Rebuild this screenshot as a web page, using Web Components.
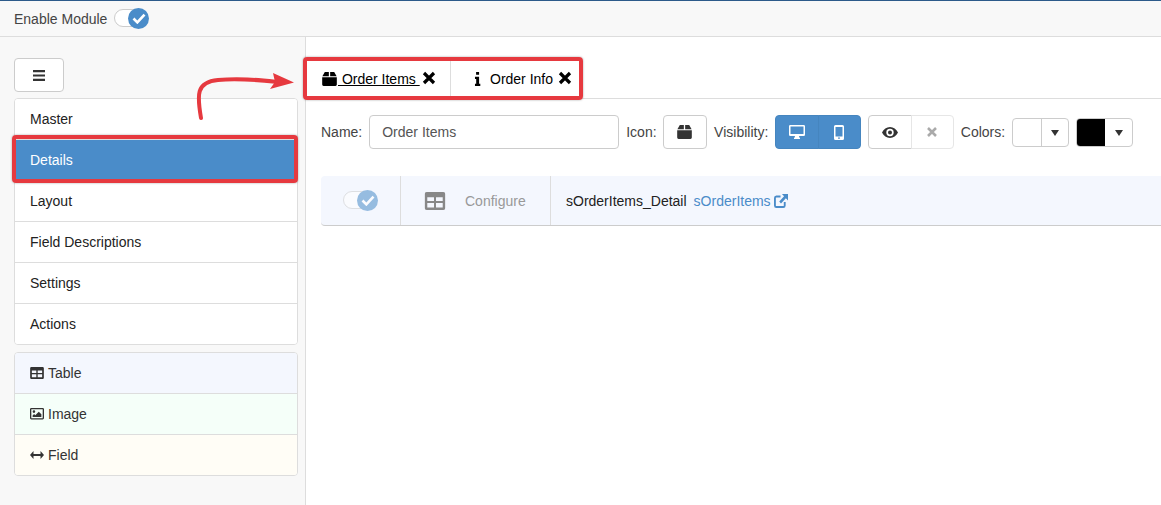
<!DOCTYPE html>
<html>
<head>
<meta charset="utf-8">
<style>
  html, body { margin: 0; height: 100%; }
  body { font: 14px/20px "Liberation Sans", Arial, sans-serif; color: #333; background: #fff; overflow: hidden; }
</style>
</head>
<body>
<admin-page></admin-page>

<script>
const ICONS = {
  box: '<svg viewBox="0 0 16 14" width="15" height="14" preserveAspectRatio="none"><path fill="currentColor" d="M3 0h4.300v4.300H.4zM8.700 0H13l2.600 4.300H8.700zM.2 5.300h15.600v7.300q0 1.400-1.400 1.400H1.600q-1.400 0-1.400-1.400z"/></svg>',
  times: '<svg viewBox="0 0 14 14" width="14" height="14"><path fill="none" stroke="currentColor" stroke-width="3.200" d="M2 2l10 10M12 2L2 12"/></svg>',
  info: '<svg viewBox="0 0 7 15" width="7" height="14"><path fill="currentColor" d="M2 0h3.200v3H2zM.8 5h4.400v7.500H6.500V15H.8v-2.500h1.300V7.500H.8z"/></svg>',
  table: '<svg viewBox="0 0 16 14" width="14" height="12"><path fill="currentColor" fill-rule="evenodd" d="M1.500 0h13Q16 0 16 1.500v11q0 1.500-1.500 1.500h-13Q0 14 0 12.500v-11Q0 0 1.500 0zM2 4v3h5.200V4zm6.800 0v3H14V4zM2 8.500V12h5.200V8.500zm6.800 0V12H14V8.500z"/></svg>',
  image: '<svg viewBox="0 0 16 13" width="14" height="11.400"><path fill="currentColor" fill-rule="evenodd" d="M1.500 0h13Q16 0 16 1.500v10q0 1.500-1.500 1.500h-13Q0 13 0 11.500v-10Q0 0 1.500 0zm0 1.300v10.400h13V1.300zM4.500 2.600a1.500 1.500 0 1 1 0 3 1.500 1.500 0 0 1 0-3zM3 10.400V8.600l1.700-1.700 1.300 1.300 4-4 3 3v3.200z"/></svg>',
  arrows: '<svg viewBox="0 0 14 8" width="14" height="8"><path fill="currentColor" d="M3.500 0v3h7V0L14 4l-3.500 4V5h-7v3L0 4z"/></svg>',
  desktop: '<svg viewBox="0 0 16 14" width="16" height="14"><path fill="currentColor" fill-rule="evenodd" d="M1.300 0h13.400Q16 0 16 1.300v8.400q0 1.300-1.300 1.300H10q0 1.300 1 2v1H5v-1q1-.7 1-2H1.300Q0 11 0 9.700V1.300Q0 0 1.300 0zm.2 1.500v7.500h13V1.500z"/></svg>',
  mobile: '<svg viewBox="0 0 10 15" width="10" height="15"><path fill="currentColor" fill-rule="evenodd" d="M1.500 0h7Q10 0 10 1.500v12Q10 15 8.500 15h-7Q0 15 0 13.500v-12Q0 0 1.500 0zm0 2v9.500h7V2zM5 12.200a.9.9 0 1 0 0 1.800.9.9 0 0 0 0-1.800z"/></svg>',
  eye: '<svg viewBox="0 0 16 11" width="16" height="11"><path fill="currentColor" fill-rule="evenodd" d="M8 0c3.500 0 6.300 2.200 8 5.500C14.300 8.800 11.500 11 8 11S1.700 8.800 0 5.500C1.700 2.200 4.500 0 8 0zM8 1.800a3.700 3.700 0 1 0 0 7.400 3.700 3.700 0 0 0 0-7.400zM8 3.500a2 2 0 1 1 0 4 2 2 0 0 1 0-4z"/></svg>',
  link: '<svg viewBox="0 0 15 14" width="14" height="14" preserveAspectRatio="none"><path fill="none" stroke="currentColor" stroke-width="2" d="M11.500 8v3.500q0 1.500-1.500 1.500H2.500Q1 13 1 11.500V4q0-1.500 1.500-1.500H7"/><path fill="currentColor" d="M8.500 0H15v6.500L12.700 4.200 7.500 9.400 5.600 7.500l5.200-5.200z"/></svg>',
  bars: '<svg viewBox="0 0 12 11" width="12" height="11"><path fill="currentColor" d="M0 0h12v2.200H0zM0 4.400h12v2.200H0zM0 8.800h12V11H0z"/></svg>'
};

class AppIcon extends HTMLElement {
  connectedCallback() {
    if (this.shadowRoot) return;
    const shadow = this.attachShadow({ mode: 'open' });
    shadow.innerHTML = `<style>:host { display: inline-flex; align-items: center; justify-content: center; } svg { display: block; }</style>${ICONS[this.getAttribute('name')]}`;
  }
}
customElements.define('app-icon', AppIcon);

class CheckToggle extends HTMLElement {
  constructor() {
    super();
    const shadow = this.attachShadow({ mode: 'open' });
    shadow.innerHTML = `
      <style>
        :host { display: inline-block; position: relative; width: 35px; height: 21px; }
        .track { position: absolute; left: 0; top: 1px; width: 34px; height: 18px; box-sizing: border-box; background: #fff; border: 1px solid #ccc; border-radius: 10px; }
        .knob { position: absolute; right: 0; top: 0; width: 21px; height: 21px; border-radius: 50%; background: #4a8cc9; }
        svg { display: block; position: absolute; left: 4px; top: 5px; }
        :host([dim]) { opacity: .55; }
      </style>
      <div class="track"></div>
      <div class="knob"><svg viewBox="0 0 12 10" width="14" height="11"><path fill="none" stroke="#fff" stroke-width="2.400" d="M1 5l3.500 3.500L11 1.500"/></svg></div>`;
  }
}
customElements.define('check-toggle', CheckToggle);

class TopBar extends HTMLElement {
  constructor() {
    super();
    const shadow = this.attachShadow({ mode: 'open' });
    shadow.innerHTML = `
      <style>
        :host { display: flex; align-items: center; gap: 7px; height: 37px; box-sizing: border-box; padding: 0 14px; background: #f8f8f8; border-top: 1px solid #2c5a8a; border-bottom: 1px solid #ddd; font-size: 14px; color: #444; }
      </style>
      <span>Enable Module</span><check-toggle></check-toggle>`;
  }
}
customElements.define('top-bar', TopBar);

class SideItem extends HTMLElement {
  constructor() {
    super();
    const shadow = this.attachShadow({ mode: 'open' });
    shadow.innerHTML = `
      <style>
        :host { display: flex; align-items: center; gap: 4px; height: 41px; box-sizing: border-box; padding: 0 15px; background: var(--item-bg, #fff); color: var(--item-color, #222); border-bottom: 1px solid #ddd; }
        :host(:last-child) { height: 40px; border-bottom: 0; }
        :host([active]) { background: #4a8cc9; color: #fff; }
      </style>
      <slot name="icon"></slot><slot></slot>`;
  }
}
customElements.define('side-item', SideItem);

class SideGroup extends HTMLElement {
  constructor() {
    super();
    const shadow = this.attachShadow({ mode: 'open' });
    shadow.innerHTML = `
      <style>
        :host { display: block; width: 284px; box-sizing: border-box; border: 1px solid #ddd; border-radius: 4px; overflow: hidden; background: #fff; }
      </style>
      <slot></slot>`;
  }
}
customElements.define('side-group', SideGroup);

class SideBar extends HTMLElement {
  constructor() {
    super();
    const shadow = this.attachShadow({ mode: 'open' });
    shadow.innerHTML = `
      <style>
        :host { display: flex; flex-direction: column; width: 306px; flex: none; box-sizing: border-box; padding: 21px 0 0 14px; background: #f8f8f8; border-right: 1px solid #ddd; }
        button { display: flex; align-items: center; justify-content: center; width: 50px; height: 34px; padding: 0; margin-bottom: 6px; background: #fff; border: 1px solid #ccc; border-radius: 4px; color: #333; }
        side-group + side-group { margin-top: 7px; }
        side-item[tint=blue] { --item-bg: #f4f7fe; --item-color: #333; }
        side-item[tint=green] { --item-bg: #f5fff9; --item-color: #333; }
        side-item[tint=yellow] { --item-bg: #fffdf6; --item-color: #333; }
      </style>
      <button><app-icon name="bars"></app-icon></button>
      <side-group>
        <side-item>Master</side-item>
        <side-item active>Details</side-item>
        <side-item>Layout</side-item>
        <side-item>Field Descriptions</side-item>
        <side-item>Settings</side-item>
        <side-item>Actions</side-item>
      </side-group>
      <side-group>
        <side-item tint="blue"><app-icon slot="icon" name="table"></app-icon>Table</side-item>
        <side-item tint="green"><app-icon slot="icon" name="image"></app-icon>Image</side-item>
        <side-item tint="yellow"><app-icon slot="icon" name="arrows"></app-icon>Field</side-item>
      </side-group>`;
  }
}
customElements.define('side-bar', SideBar);

class TabStrip extends HTMLElement {
  constructor() {
    super();
    const shadow = this.attachShadow({ mode: 'open' });
    shadow.innerHTML = `
      <style>
        :host { display: flex; height: 62px; box-sizing: border-box; padding-top: 22px; border-bottom: 1px solid #ddd; color: #000; }
        .tab { display: flex; align-items: center; height: 39px; box-sizing: border-box; border-right: 1px solid #ddd; }
        .one { width: 145px; padding-left: 16px; }
        .two { padding-left: 23px; border-right: 0; }
        .one .label { margin-left: 1px; text-decoration: underline; white-space: pre; }
        .two .label { margin-left: 9px; }
        .x { margin-left: 5px; margin-top: -2px; }
        .one .x { margin-left: 2px; }
      </style>
      <div class="tab one"><app-icon name="box"></app-icon><span class="label"> Order Items </span><app-icon class="x" name="times"></app-icon></div>
      <div class="tab two"><app-icon name="info"></app-icon><span class="label">Order Info</span><app-icon class="x" name="times"></app-icon></div>`;
  }
}
customElements.define('tab-strip', TabStrip);

class ToolRow extends HTMLElement {
  constructor() {
    super();
    const shadow = this.attachShadow({ mode: 'open' });
    shadow.innerHTML = `
      <style>
        :host { display: flex; align-items: center; height: 34px; margin: 16px 0 0 15px; gap: 7px; color: #444; white-space: nowrap; }
        .input { display: flex; align-items: center; width: 250px; height: 34px; box-sizing: border-box; padding: 0 12px; border: 1px solid #ccc; border-radius: 4px; color: #555; }
        .btn { display: flex; align-items: center; justify-content: center; height: 34px; box-sizing: border-box; border: 1px solid #ccc; border-radius: 4px; color: #333; background: #fff; }
        .group { display: flex; }
        .group .btn { width: 44px; }
        .group .btn:first-child { border-radius: 4px 0 0 4px; }
        .group .btn:last-child { border-radius: 0 4px 4px 0; margin-left: -1px; width: 43px; }
        .on .btn { background: #4a8cc9; border-color: #4585bf; color: #fff; }
        .muted { color: #aaa; border-color: #e6e6e6; }
        .color { display: flex; width: 57px; height: 29px; box-sizing: border-box; border: 1px solid #ccc; border-radius: 4px; overflow: hidden; background: #fff; }
        .swatch { width: 28px; border-right: 1px solid #ccc; }
        .black { background: #000; border-right: 0; }
        .caret { flex: 1; display: flex; align-items: center; justify-content: center; }
        .caret i { display: block; width: 0; height: 0; margin-top: 1px; border: 4px solid transparent; border-top: 6px solid #333; border-bottom: 0; }
      </style>
      <span>Name:</span>
      <div class="input">Order Items</div>
      <span style="margin-right:-1px">Icon:</span>
      <div class="btn" style="width:44px"><app-icon name="box"></app-icon></div>
      <span style="margin:0 -.5px 0 .5px">Visibility:</span>
      <div class="group on">
        <div class="btn"><app-icon name="desktop"></app-icon></div>
        <div class="btn"><app-icon name="mobile"></app-icon></div>
      </div>
      <div class="group">
        <div class="btn"><app-icon name="eye"></app-icon></div>
        <div class="btn muted"><app-icon name="times" style="transform:scale(.8)"></app-icon></div>
      </div>
      <span>Colors:</span>
      <div class="color"><div class="swatch"></div><div class="caret"><i></i></div></div>
      <div class="color"><div class="swatch black"></div><div class="caret"><i></i></div></div>`;
  }
}
customElements.define('tool-row', ToolRow);

class DetailRow extends HTMLElement {
  constructor() {
    super();
    const shadow = this.attachShadow({ mode: 'open' });
    shadow.innerHTML = `
      <style>
        :host { display: flex; align-items: stretch; height: 50px; box-sizing: border-box; margin: 27px 0 0 15px; background: #f4f7fe; border-bottom: 1px solid #ccc; border-radius: 4px 0 0 4px; }
        .cell { display: flex; align-items: center; border-right: 1px solid #ddd; box-sizing: border-box; }
        .tog { width: 80px; padding-left: 22px; }
        .cfg { width: 150px; padding-left: 27px; color: #999; }
        .cfg app-icon { color: #888; margin-right: 23px; }
        .cfg span { margin-top: 1px; }
        .name { display: flex; align-items: center; padding-left: 15px; color: #222; gap: 7px; }
        .link { color: #4a8cc9; display: flex; align-items: center; gap: 3px; }
      </style>
      <div class="cell tog"><check-toggle dim></check-toggle></div>
      <div class="cell cfg"><app-icon name="table" style="transform:scale(1.5)"></app-icon><span>Configure</span></div>
      <div class="name"><span>sOrderItems_Detail</span><span class="link">sOrderItems<app-icon name="link"></app-icon></span></div>`;
  }
}
customElements.define('detail-row', DetailRow);

class CalloutLayer extends HTMLElement {
  constructor() {
    super();
    const shadow = this.attachShadow({ mode: 'open' });
    shadow.innerHTML = `
      <style>
        :host { position: absolute; left: 0; top: 0; width: 1161px; height: 505px; pointer-events: none; }
        .box { position: absolute; box-sizing: border-box; border: 4px solid #e6393f; border-radius: 4px; box-shadow: 0 0 2px rgba(60,60,60,.5); }
        svg { position: absolute; left: 0; top: 0; }
      </style>
      <div class="box" style="left:12px;top:135px;width:286px;height:48px"></div>
      <div class="box" style="left:303px;top:57px;width:280px;height:43px"></div>
      <svg width="1161" height="505">
        <path fill="none" stroke="#e6393f" stroke-width="4" stroke-linecap="round" d="M201 118C197 95 196 82 218 80C240 78 258 80 278 82"/>
        <path fill="#e6393f" d="M273 73L294 82.500L270 89L275 82z"/>
      </svg>`;
  }
}
customElements.define('callout-layer', CalloutLayer);

class AdminPage extends HTMLElement {
  constructor() {
    super();
    const shadow = this.attachShadow({ mode: 'open' });
    shadow.innerHTML = `
      <style>
        :host { display: flex; flex-direction: column; position: relative; width: 1161px; height: 505px; overflow: hidden; }
        .body { display: flex; flex: 1; min-height: 0; }
        .main { flex: 1; min-width: 0; }
      </style>
      <top-bar></top-bar>
      <div class="body">
        <side-bar></side-bar>
        <div class="main">
          <tab-strip></tab-strip>
          <tool-row></tool-row>
          <detail-row></detail-row>
        </div>
      </div>
      <callout-layer></callout-layer>`;
  }
}
customElements.define('admin-page', AdminPage);
</script>
</body>
</html>
